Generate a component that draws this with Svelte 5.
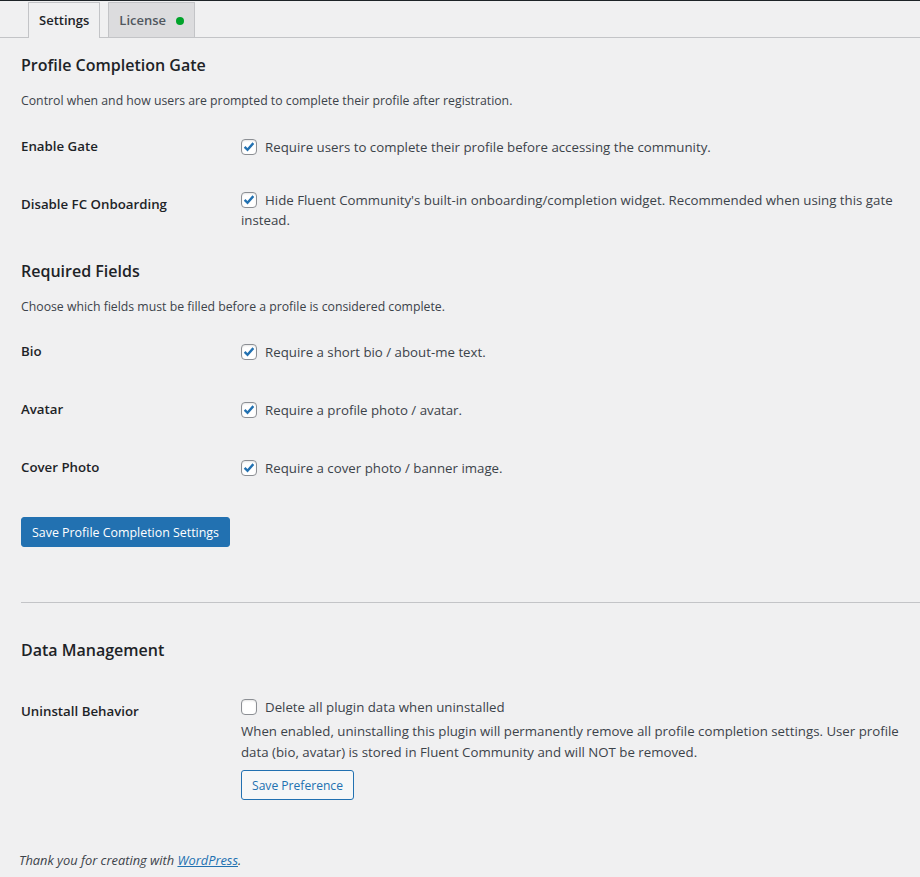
<script lang="ts">
    const tabs = [
        { label: "Settings", active: true, dot: false },
        { label: "License", active: false, dot: true }
    ];
    const gateRows = [
        { label: "Enable Gate", text: "Require users to complete their profile before accessing the community.", short: true },
        { label: "Disable FC Onboarding", text: "Hide Fluent Community's built-in onboarding/completion widget. Recommended when using this gate instead.", tall: true }
    ];
    const fieldRows = [
        { label: "Bio", text: "Require a short bio / about-me text." },
        { label: "Avatar", text: "Require a profile photo / avatar." },
        { label: "Cover Photo", text: "Require a cover photo / banner image." }
    ];
</script>

{#snippet row(item)}
    <div class="row" class:short={item.short}>
        <div class="label" class:tall={item.tall}>{item.label}</div>
        <label class="field"><input type="checkbox" checked />{item.text}</label>
    </div>
{/snippet}

<div class="wrap">
    <nav class="tabs">
        {#each tabs as tab}
            <span class="tab" class:active={tab.active}>{tab.label}{#if tab.dot}<i class="dot"></i>{/if}</span>
        {/each}
    </nav>

    <h2 class="first">Profile Completion Gate</h2>
    <p class="desc">Control when and how users are prompted to complete their profile after registration.</p>
    <div class="rows">
        {#each gateRows as item}{@render row(item)}{/each}
    </div>

    <h2 class="second">Required Fields</h2>
    <p class="desc">Choose which fields must be filled before a profile is considered complete.</p>
    <div class="rows required">
        {#each fieldRows as item}{@render row(item)}{/each}
    </div>

    <button class="primary">Save Profile Completion Settings</button>
    <hr />

    <h2 class="third">Data Management</h2>
    <div class="row uninstall">
        <div class="label tall">Uninstall Behavior</div>
        <div class="field">
            <label><input type="checkbox" />Delete all plugin data when uninstalled</label>
            <p class="note">When enabled, uninstalling this plugin will permanently remove all profile completion settings. User profile data (bio, avatar) is stored in Fluent Community and will NOT be removed.</p>
            <button class="secondary">Save Preference</button>
        </div>
    </div>

    <footer>Thank you for creating with <a href="#top">WordPress</a>.</footer>
</div>

<style>
    :global(body) {
        background: #f0f0f1;
        color: #3c434a;
        font-family: "Open Sans", "Noto Sans", sans-serif;
        font-size: 13.28px;
        line-height: 1.4;
    }

    .wrap {
        height: 877px;
        overflow: hidden;
        padding-left: 21px;
        box-sizing: border-box;
    }

    .tabs {
        display: flex;
        gap: 8px;
        height: 35px;
        margin-left: -21px;
        padding-left: 28px;
        padding-top: 1px;
        border-bottom: 1px solid #c3c4c7;
        border-top: 1px solid #1d2327;
    }

    .tab {
        display: flex;
        align-items: center;
        padding: 0 10px;
        border: 1px solid #c3c4c7;
        border-bottom: none;
        background: #dcdcde;
        color: #50575e;
        font-weight: 600;
        font-size: 13px;
    }

    .tab.active {
        background: #f0f0f1;
        color: #1d2327;
        margin-bottom: -1px;
    }

    .dot {
        width: 8px;
        height: 8px;
        margin: 2px 0 0 10px;
        border-radius: 50%;
        background: #00a32a;
    }

    h2 {
        margin: 0;
        color: #1d2327;
        font-size: 16px;
        font-weight: 600;
        line-height: 22px;
    }

    .first { margin-top: 16px; }
    .second { margin-top: 12px; }
    .third { margin-top: 36px; }

    .desc {
        margin: 16px 0 27px;
        font-size: 12.27px;
        line-height: 18px;
    }

    .rows {
        display: flex;
        flex-direction: column;
    }

    .rows.required {
        margin-top: -1px;
    }

    .row {
        display: flex;
        min-height: 58px;
        padding-right: 20px;
    }

    .row.short {
        min-height: 53px;
    }

    .label {
        width: 220px;
        flex: none;
        margin-top: -1px;
        color: #1d2327;
        font-weight: 600;
        line-height: 20px;
    }

    .label.tall {
        margin-top: 4px;
    }

    .field {
        line-height: 20px;
        flex: 1;
    }

    input[type="checkbox"] {
        appearance: none;
        width: 16px;
        height: 16px;
        margin: 0 8px 0 0;
        vertical-align: -3px;
        background: #fff;
        border: 1px solid #8c8f94;
        border-radius: 4px;
        box-shadow: inset 0 1px 2px rgba(0, 0, 0, 0.1);
    }

    input[type="checkbox"]:checked {
        background: #fff url("data:image/svg+xml,%3Csvg xmlns='http://www.w3.org/2000/svg' viewBox='0 0 16 16'%3E%3Cpath d='M3 7.8l3.3 3.4L13 3.6' fill='none' stroke='%232271b1' stroke-width='2.7'/%3E%3C/svg%3E") center no-repeat;
    }

    button {
        display: block;
        height: 30px;
        padding: 1px 10px 0;
        border: 1px solid #2271b1;
        border-radius: 3px;
        font: inherit;
    }

    .primary {
        margin-top: 1px;
        background: #2271b1;
        color: #fff;
        font-size: 12.42px;
    }

    .secondary {
        margin-top: 7px;
        background: #f6f7f7;
        color: #2271b1;
        font-size: 12.1px;
    }

    hr {
        margin: 55px 0 0;
        border: 0;
        border-top: 1px solid #c3c4c7;
    }

    .note {
        margin: 4px 0 0;
        line-height: 21px;
    }

    .uninstall {
        margin-top: 36px;
        height: 155px;
    }

    footer {
        margin-left: -2px;
        font-size: 12.85px;
        font-style: italic;
    }

    a {
        color: #2271b1;
    }
</style>
